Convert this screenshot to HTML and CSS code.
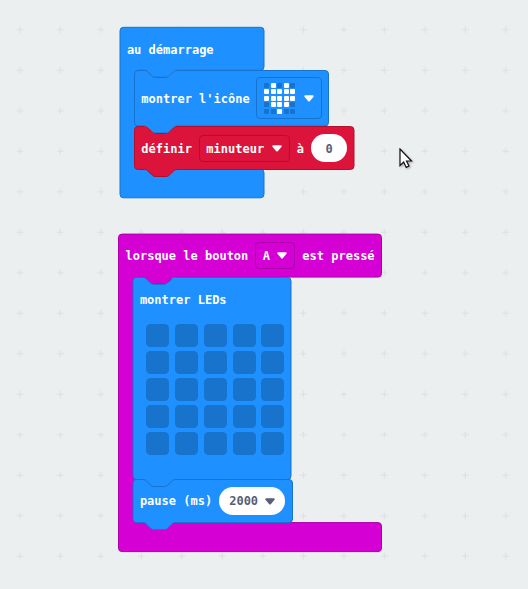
FILE: index.html
```html
<!DOCTYPE html>
<html lang="fr">
<head>
<meta charset="utf-8">
<title>Blocs</title>
<link rel="stylesheet" href="styles.css">
</head>
<body>
<main class="workspace">
  <svg class="grid" width="528" height="589" aria-hidden="true">
    <defs><pattern id="cross" x="-.2" y="9.7" width="40.5" height="40.5" patternUnits="userSpaceOnUse"><path d="M16.500 20H23.500M20 16.500V23.500" stroke="#dce0e1"/></pattern></defs>
    <rect width="528" height="589" fill="url(#cross)"/>
  </svg>

  <section class="stack start">
    <svg class="shape" width="240" height="176"><path class="blue" d="M4 .5H141Q144.500 .5 144.500 4V40Q144.500 43.500 141 43.500H56.900c-1.800 0-2.700 .9-3.600 1.800l-3.600 3.400c-.9 .9-1.800 1.800-3.600 1.800h-10.800c-1.800 0-2.700-.9-3.600-1.800l-3.600-3.400c-.9-.9-1.800-1.800-3.600-1.800H19V142.500H141Q144.500 142.500 144.500 146V167.500Q144.500 171 141 171H4Q.5 171 .5 167.500V4Q.5 .5 4 .5Z"/></svg>
    <div class="header"><span>au démarrage</span></div>
    <div class="body">
      <div class="block icon-block">
        <svg class="shape" width="240" height="70"><path class="blue" d="M4 .5H10.500c1.800 0 2.700 .9 3.600 1.800l3.600 3.400c.9 .9 1.800 1.800 3.600 1.800h10.800c1.800 0 2.700-.9 3.600-1.800l3.600-3.400c.9-.9 1.800-1.800 3.600-1.800H191Q194.500 .5 194.500 4V52.500Q194.500 56 191 56H42.900c-1.800 0-2.700 .9-3.600 1.800l-3.600 3.400c-.9 .9-1.800 1.800-3.600 1.800h-10.800c-1.800 0-2.700-.9-3.600-1.800l-3.600-3.400c-.9-.9-1.800-1.800-3.600-1.800H4Q.5 56 .5 52.500V4Q.5 .5 4 .5Z"/></svg>
        <span>montrer l'icône</span>
        <div class="field icon-field">
          <div class="heart"><i></i><i class="on"></i><i></i><i class="on"></i><i></i><i class="on"></i><i class="on"></i><i class="on"></i><i class="on"></i><i class="on"></i><i class="on"></i><i class="on"></i><i class="on"></i><i class="on"></i><i class="on"></i><i></i><i class="on"></i><i class="on"></i><i class="on"></i><i></i><i></i><i></i><i class="on"></i><i></i><i></i></div>
          <svg class="arrow" viewBox="0 0 10 7"><path d="M1.500 .3H8.500Q10.500 .5 9.300 2L6 6Q5 7 4 6L.7 2Q-.5 .5 1.500 .3Z"/></svg>
        </div>
      </div>
      <div class="block set-block">
        <svg class="shape" width="240" height="60"><path class="red" d="M4 .5H10.500c1.800 0 2.700 .9 3.600 1.800l3.600 3.400c.9 .9 1.800 1.800 3.600 1.800h10.800c1.800 0 2.700-.9 3.600-1.800l3.600-3.400c.9-.9 1.800-1.800 3.600-1.800H216.500Q220 .5 220 4V40Q220 43.500 216.500 43.500H42.900c-1.800 0-2.700 .9-3.600 1.800l-3.600 3.400c-.9 .9-1.800 1.800-3.600 1.800h-10.800c-1.800 0-2.700-.9-3.600-1.800l-3.600-3.400c-.9-.9-1.800-1.800-3.600-1.800H4Q.5 43.500 .5 40V4Q.5 .5 4 .5Z"/></svg>
        <span>définir</span>
        <div class="field var-field"><span>minuteur</span><svg class="arrow" viewBox="0 0 10 7"><path d="M1.500 .3H8.500Q10.500 .5 9.300 2L6 6Q5 7 4 6L.7 2Q-.5 .5 1.500 .3Z"/></svg></div>
        <span>à</span>
        <div class="pill zero">0</div>
      </div>
    </div>
  </section>

  <section class="stack button">
    <svg class="shape" width="270" height="322"><path class="magenta" d="M4 .5H260Q263.500 .5 263.500 4V40Q263.500 43.500 260 43.500H56.900c-1.800 0-2.700 .9-3.600 1.800l-3.600 3.400c-.9 .9-1.800 1.800-3.600 1.800h-10.800c-1.800 0-2.700-.9-3.600-1.800l-3.600-3.400c-.9-.9-1.800-1.800-3.600-1.800H19V289H260Q263.500 289 263.500 292.500V314.500Q263.500 318 260 318H4Q.5 318 .5 314.500V4Q.5 .5 4 .5Z"/></svg>
    <div class="header">
      <span>lorsque le bouton</span>
      <div class="field button-field"><span>A</span><svg class="arrow" viewBox="0 0 10 7"><path d="M1.500 .3H8.500Q10.500 .5 9.300 2L6 6Q5 7 4 6L.7 2Q-.5 .5 1.500 .3Z"/></svg></div>
      <span>est pressé</span>
    </div>
    <div class="body">
      <div class="block led-block">
        <svg class="shape" width="180" height="215"><path class="blue" d="M4 .5H10.500c1.800 0 2.700 .9 3.600 1.800l3.600 3.400c.9 .9 1.800 1.800 3.600 1.800h10.800c1.800 0 2.700-.9 3.600-1.800l3.600-3.400c.9-.9 1.800-1.800 3.600-1.800H155Q158.500 .5 158.500 4V199Q158.500 202.500 155 202.500H42.900c-1.800 0-2.700 .9-3.600 1.800l-3.600 3.400c-.9 .9-1.800 1.800-3.600 1.800h-10.800c-1.800 0-2.700-.9-3.600-1.800l-3.600-3.400c-.9-.9-1.800-1.800-3.600-1.800H4Q.5 202.500 .5 199V4Q.5 .5 4 .5Z"/></svg>
        <span>montrer LEDs</span>
        <div class="leds"><i></i><i></i><i></i><i></i><i></i><i></i><i></i><i></i><i></i><i></i><i></i><i></i><i></i><i></i><i></i><i></i><i></i><i></i><i></i><i></i><i></i><i></i><i></i><i></i><i></i></div>
      </div>
      <div class="block pause-block">
        <svg class="shape" width="180" height="60"><path class="blue" d="M4 .5H10.500c1.800 0 2.700 .9 3.600 1.800l3.600 3.400c.9 .9 1.800 1.800 3.600 1.800h10.800c1.800 0 2.700-.9 3.600-1.800l3.600-3.400c.9-.9 1.800-1.800 3.600-1.800H156.500Q160 .5 160 4V40Q160 43.500 156.500 43.500H42.900c-1.800 0-2.700 .9-3.600 1.800l-3.600 3.400c-.9 .9-1.800 1.800-3.600 1.800h-10.800c-1.800 0-2.700-.9-3.600-1.800l-3.600-3.400c-.9-.9-1.800-1.800-3.600-1.800H4Q.5 43.500 .5 40V4Q.5 .5 4 .5Z"/></svg>
        <span>pause (ms)</span>
        <div class="pill delay"><span>2000</span><svg class="arrow" viewBox="0 0 10 7"><path d="M1.500 .3H8.500Q10.500 .5 9.300 2L6 6Q5 7 4 6L.7 2Q-.5 .5 1.500 .3Z"/></svg></div>
      </div>
    </div>
  </section>

  <svg class="cursor" width="14" height="22" viewBox="0 0 14 22"><path d="M1 1V17.500L4.700 14L7.200 19.400L10 18L7.500 13H12.500Z" fill="#fff" stroke="#111" stroke-width="1.200"/></svg>
</main>
</body>
</html>
```
FILE: styles.css
```css
body {
  margin: 0;
}

.workspace {
  position: relative;
  width: 528px;
  height: 589px;
  overflow: hidden;
  background: #ebeff0;
  color: #fff;
  font: bold 12px/16px "DejaVu Sans Mono", monospace;
  white-space: nowrap;
}

.grid {
  display: block;
}

.stack {
  position: absolute;
}

.start {
  left: 119.4px;
  top: 26.5px;
}

.button {
  left: 118px;
  top: 233.5px;
}

.shape {
  position: absolute;
  left: 0;
  top: 0;
  z-index: -1;
  overflow: visible;
}

.start > .shape path {
  transform: translate(.5px, -.2px);
}

.button > .shape path {
  transform: translate(0, -.4px);
}

.button .block > .shape path {
  transform: translate(.5px, 0);
}

.stack,
.block {
  isolation: isolate;
}

.blue {
  fill: #1e90ff;
  stroke: #1873cc;
}

.red {
  fill: #dc143c;
  stroke: #b01030;
}

.magenta {
  fill: #d400d4;
  stroke: #aa00aa;
}

.header {
  display: flex;
  align-items: center;
  gap: 7px;
  height: 44px;
  box-sizing: border-box;
  padding-left: 7.5px;
}

.start .header {
  padding-top: 2px;
}

.body {
  margin: -1px 0 0 14.4px;
}

.start .body {
  margin-top: -.5px;
}

.block {
  position: relative;
  display: flex;
  align-items: center;
  box-sizing: border-box;
  padding-left: 7.5px;
  gap: 7px;
}

.field {
  display: flex;
  align-items: center;
  justify-content: space-between;
  box-sizing: border-box;
  height: 27px;
  border: 1px solid #1873cc;
  border-radius: 4px;
  padding: 0 7px 0 6.5px;
}

.arrow {
  flex: none;
  width: 10px;
  height: 7px;
  fill: currentColor;
}

.icon-block {
  height: 56px;
}

.icon-block > span,
.set-block > span {
  padding-top: 1px;
}

.icon-field {
  width: 66px;
  height: 42px;
  margin-left: -.6px;
  padding-left: 7px;
}

.heart {
  display: grid;
  grid-template-columns: repeat(5, 5px);
  grid-auto-rows: 5px;
  gap: 1.5px;
}

.heart i {
  border-radius: 1px;
  background: #1873cc;
}

.heart .on {
  background: #fff;
}

.set-block {
  height: 44px;
}

.var-field {
  width: 91px;
  border-color: #b01030;
}

.var-field span,
.zero {
  padding-top: 1px;
}

.pill {
  display: flex;
  align-items: center;
  justify-content: center;
  box-sizing: border-box;
  height: 28px;
  border-radius: 14px;
  background: #fff;
  color: #575e75;
}

.zero {
  width: 36px;
}

.button-field {
  width: 40px;
  border-color: #aa00aa;
}

.led-block {
  flex-direction: column;
  align-items: flex-start;
  height: 202px;
  padding-top: 15px;
}

.leds {
  display: grid;
  grid-template-columns: repeat(5, 23px);
  grid-auto-rows: 23px;
  gap: 4px 5.8px;
  margin: 9.3px 0 0 6.3px;
}

.leds i {
  border-radius: 4.5px;
  background: #1873cc;
}

.pause-block {
  height: 44px;
  padding-top: 1px;
}

.delay {
  width: 66px;
  gap: 7px;
}

.cursor {
  position: absolute;
  left: 399px;
  top: 148px;
  filter: drop-shadow(1px 1px 1px rgba(0, 0, 0, .3));
}
```
